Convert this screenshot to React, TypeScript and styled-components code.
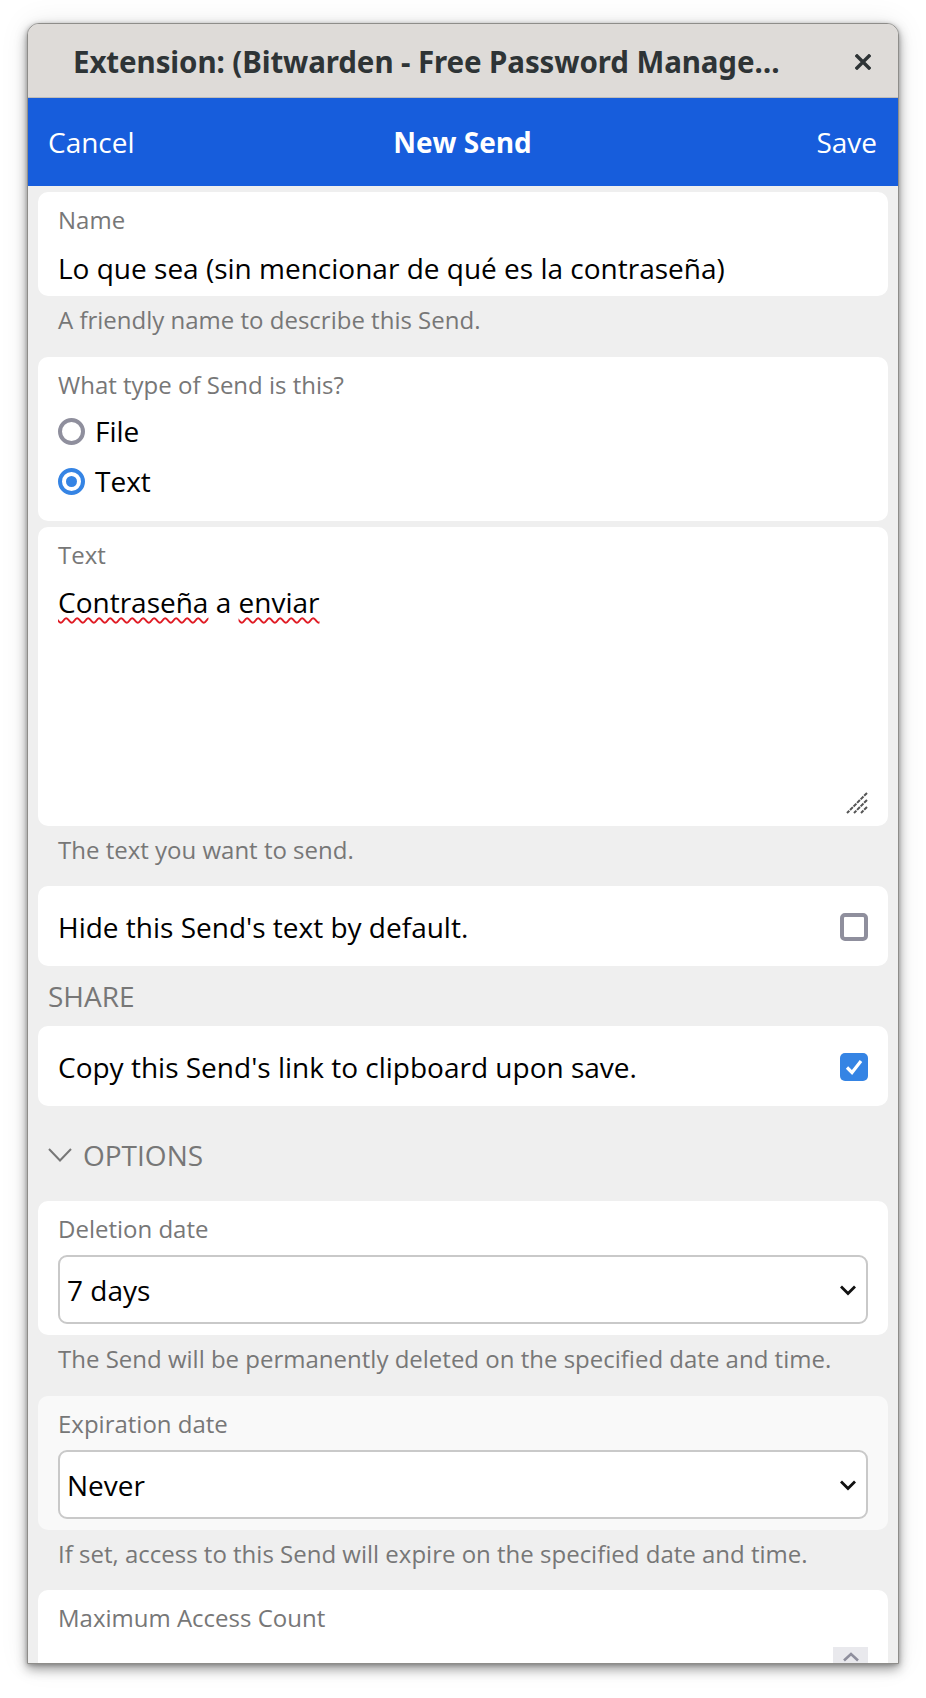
import React from 'react';
import styled, { createGlobalStyle } from 'styled-components';

const GlobalStyle = createGlobalStyle`
  html, body { margin: 0; padding: 0; background: #ffffff; }
  body { font-family: "Open Sans", "Noto Sans", sans-serif; }
  * { box-sizing: border-box; }
`;

const Page = styled.div`
  width: 926px;
  height: 1698px;
  padding: 23px 27px 0 27px;
  overflow: hidden;
  background: #ffffff;
`;

const Window = styled.div`
  width: 872px;
  height: 1641px;
  border: 1px solid #8e8d8a;
  border-radius: 12px 12px 0 0;
  overflow: hidden;
  display: flex;
  flex-direction: column;
  background: #efefef;
  box-shadow: 0 5px 12px rgba(0, 0, 0, 0.38), 0 1px 4px rgba(0, 0, 0, 0.25),
    0 0 30px rgba(0, 0, 0, 0.08);
`;

const TitleBar = styled.div`
  flex: none;
  height: 74px;
  background: #dedbd8;
  border-bottom: 1px solid #c0bdb8;
  display: flex;
  align-items: center;
  padding: 2px 26px 0 45px;
  color: #2e3436;
`;

const TitleText = styled.div`
  font-family: "Noto Sans", "Open Sans", sans-serif;
  font-weight: 700;
  font-size: 29.5px;
  letter-spacing: -0.1px;
  white-space: nowrap;
`;

const CloseButton = styled.div`
  margin-left: auto;
  width: 18px;
  height: 18px;
  display: flex;
  align-items: center;
  justify-content: center;
`;

const Header = styled.header`
  flex: none;
  height: 88px;
  background: #175ddc;
  color: #ffffff;
  display: grid;
  grid-template-columns: 1fr auto 1fr;
  align-items: center;
  padding: 0 21px 0 20px;
  font-size: 28px;
`;

const HeaderAction = styled.span<{ $end?: boolean }>`
  justify-self: ${(p) => (p.$end ? 'end' : 'start')};
`;

const HeaderTitle = styled.h1`
  margin: 0;
  font-size: 28px;
  font-weight: 700;
`;

const Content = styled.main`
  flex: 1;
  overflow: hidden;
  padding: 6px 10px 0 10px;
  display: flex;
  flex-direction: column;
`;

const Card = styled.section<{ $pb?: number; $tint?: boolean }>`
  flex: none;
  background: ${(p) => (p.$tint ? '#f9f9f9' : '#ffffff')};
  border-radius: 10px;
  padding: 10px 20px ${(p) => p.$pb ?? 10}px 20px;
`;

const Label = styled.div`
  font-size: 24px;
  line-height: 36px;
  color: #777777;
`;

const Value = styled.div`
  margin-top: 8px;
  font-size: 28px;
  line-height: 44px;
  color: #000000;
`;

const Helper = styled.p<{ $pb?: number }>`
  margin: 0;
  padding: 7px 20px ${(p) => p.$pb ?? 20}px 20px;
  font-size: 24px;
  line-height: 34px;
  color: #777777;
`;

const RadioList = styled.div`
  margin-top: 3px;
  display: flex;
  flex-direction: column;
`;

const RadioRow = styled.label`
  height: 50px;
  display: flex;
  align-items: center;
  gap: 10px;
  font-size: 28px;
  color: #000000;
`;

const RadioCircle = styled.span<{ $checked?: boolean }>`
  width: 27px;
  height: 27px;
  border-radius: 50%;
  border: 4px solid ${(p) => (p.$checked ? '#3584e4' : '#8f8f9d')};
  display: flex;
  align-items: center;
  justify-content: center;
  &::after {
    content: '';
    width: 11px;
    height: 11px;
    border-radius: 50%;
    background: ${(p) => (p.$checked ? '#3584e4' : 'transparent')};
  }
`;

const TextBox = styled.div`
  position: relative;
  margin-top: 4px;
  height: 239px;
  padding-top: 5px;
  font-size: 28px;
  line-height: 40px;
  color: #000000;
`;

const Misspelled = styled.span`
  text-decoration: underline wavy #e01b24;
  text-decoration-thickness: 2px;
  text-underline-offset: 4px;
`;

const Grip = styled.svg`
  position: absolute;
  right: 0;
  bottom: 2px;
`;

const ToggleCard = styled.section`
  flex: none;
  height: 80px;
  background: #ffffff;
  border-radius: 10px;
  padding: 2px 20px 0 20px;
  display: flex;
  align-items: center;
  justify-content: space-between;
  font-size: 28px;
  color: #000000;
`;

const Checkbox = styled.span<{ $checked?: boolean }>`
  width: 28px;
  height: 28px;
  border-radius: 5px;
  border: ${(p) => (p.$checked ? 'none' : '4px solid #8f8f9d')};
  background: ${(p) => (p.$checked ? '#3584e4' : '#ffffff')};
  display: flex;
  align-items: center;
  justify-content: center;
`;

const SectionHeader = styled.h2<{ $mt: number; $mb: number }>`
  margin: ${(p) => p.$mt}px 0 ${(p) => p.$mb}px 0;
  padding-left: 10px;
  display: flex;
  align-items: center;
  gap: 11px;
  font-size: 28px;
  line-height: 36px;
  font-weight: 400;
  color: #777777;
  text-transform: uppercase;
`;

const Select = styled.div`
  margin-top: 8px;
  height: 69px;
  border: 2px solid #c9c9c9;
  border-radius: 9px;
  background: #ffffff;
  display: flex;
  align-items: center;
  justify-content: space-between;
  padding: 0 9px 0 7px;
  font-size: 28px;
  color: #000000;
`;

const NumberField = styled.div`
  margin-top: 11px;
  height: 40px;
  display: flex;
  justify-content: flex-end;
`;

const SpinBox = styled.div`
  width: 35px;
  height: 30px;
  background: #e9e9ed;
  display: flex;
  justify-content: center;
  padding-top: 5px;
`;

const Chevron = () => (
  <svg width="18" height="12" viewBox="0 0 18 12">
    <polyline points="2,2.5 9,9.5 16,2.5" fill="none" stroke="#111" strokeWidth="2.8" />
  </svg>
);

export default function App() {
  return (
    <>
      <GlobalStyle />
      <Page>
        <Window>
          <TitleBar>
            <TitleText>Extension: (Bitwarden - Free Password Manage…</TitleText>
            <CloseButton>
              <svg width="16" height="16" viewBox="0 0 16 16">
                <path d="M2 2 L14 14 M14 2 L2 14" stroke="#2e3436" strokeWidth="3.4" strokeLinecap="square" />
              </svg>
            </CloseButton>
          </TitleBar>
          <Header>
            <HeaderAction>Cancel</HeaderAction>
            <HeaderTitle>New Send</HeaderTitle>
            <HeaderAction $end>Save</HeaderAction>
          </Header>
          <Content>
            <Card $pb={6}>
              <Label>Name</Label>
              <Value>Lo que sea (sin mencionar de qué es la contraseña)</Value>
            </Card>
            <Helper>A friendly name to describe this Send.</Helper>

            <Card $pb={15}>
              <Label>What type of Send is this?</Label>
              <RadioList>
                <RadioRow>
                  <RadioCircle />
                  File
                </RadioRow>
                <RadioRow>
                  <RadioCircle $checked />
                  Text
                </RadioRow>
              </RadioList>
            </Card>

            <Card $pb={10} style={{ marginTop: 6 }}>
              <Label>Text</Label>
              <TextBox>
                <Misspelled>Contraseña</Misspelled> a <Misspelled>enviar</Misspelled>
                <Grip width="22" height="22" viewBox="0 0 22 22">
                  <path
                    d="M21 1 L1 21 M21 8 L8 21 M21 15 L15 21"
                    stroke="#555"
                    strokeWidth="2"
                    strokeDasharray="4 1"
                  />
                </Grip>
              </TextBox>
            </Card>
            <Helper $pb={19}>The text you want to send.</Helper>

            <ToggleCard>
              <span>Hide this Send's text by default.</span>
              <Checkbox />
            </ToggleCard>

            <SectionHeader $mt={12} $mb={12}>Share</SectionHeader>

            <ToggleCard>
              <span>Copy this Send's link to clipboard upon save.</span>
              <Checkbox $checked>
                <svg width="20" height="18" viewBox="0 0 20 18">
                  <polyline points="3,9.5 8,14.5 17,3" fill="none" stroke="#fff" strokeWidth="3.2" />
                </svg>
              </Checkbox>
            </ToggleCard>

            <SectionHeader $mt={31} $mb={28}>
              <svg width="24" height="14" viewBox="0 0 24 14">
                <polyline points="1,1 12,12.5 23,1" fill="none" stroke="#777" strokeWidth="2" />
              </svg>
              Options
            </SectionHeader>

            <Card $pb={11}>
              <Label>Deletion date</Label>
              <Select>
                <span>7 days</span>
                <Chevron />
              </Select>
            </Card>
            <Helper>The Send will be permanently deleted on the specified date and time.</Helper>

            <Card $pb={11} $tint>
              <Label>Expiration date</Label>
              <Select>
                <span>Never</span>
                <Chevron />
              </Select>
            </Card>
            <Helper $pb={19}>If set, access to this Send will expire on the specified date and time.</Helper>

            <Card $pb={0}>
              <Label>Maximum Access Count</Label>
              <NumberField>
                <SpinBox>
                  <svg width="18" height="10" viewBox="0 0 18 10">
                    <polyline points="2,8.5 9,2 16,8.5" fill="none" stroke="#8f8f9d" strokeWidth="2.6" />
                  </svg>
                </SpinBox>
              </NumberField>
            </Card>
          </Content>
        </Window>
      </Page>
    </>
  );
}
